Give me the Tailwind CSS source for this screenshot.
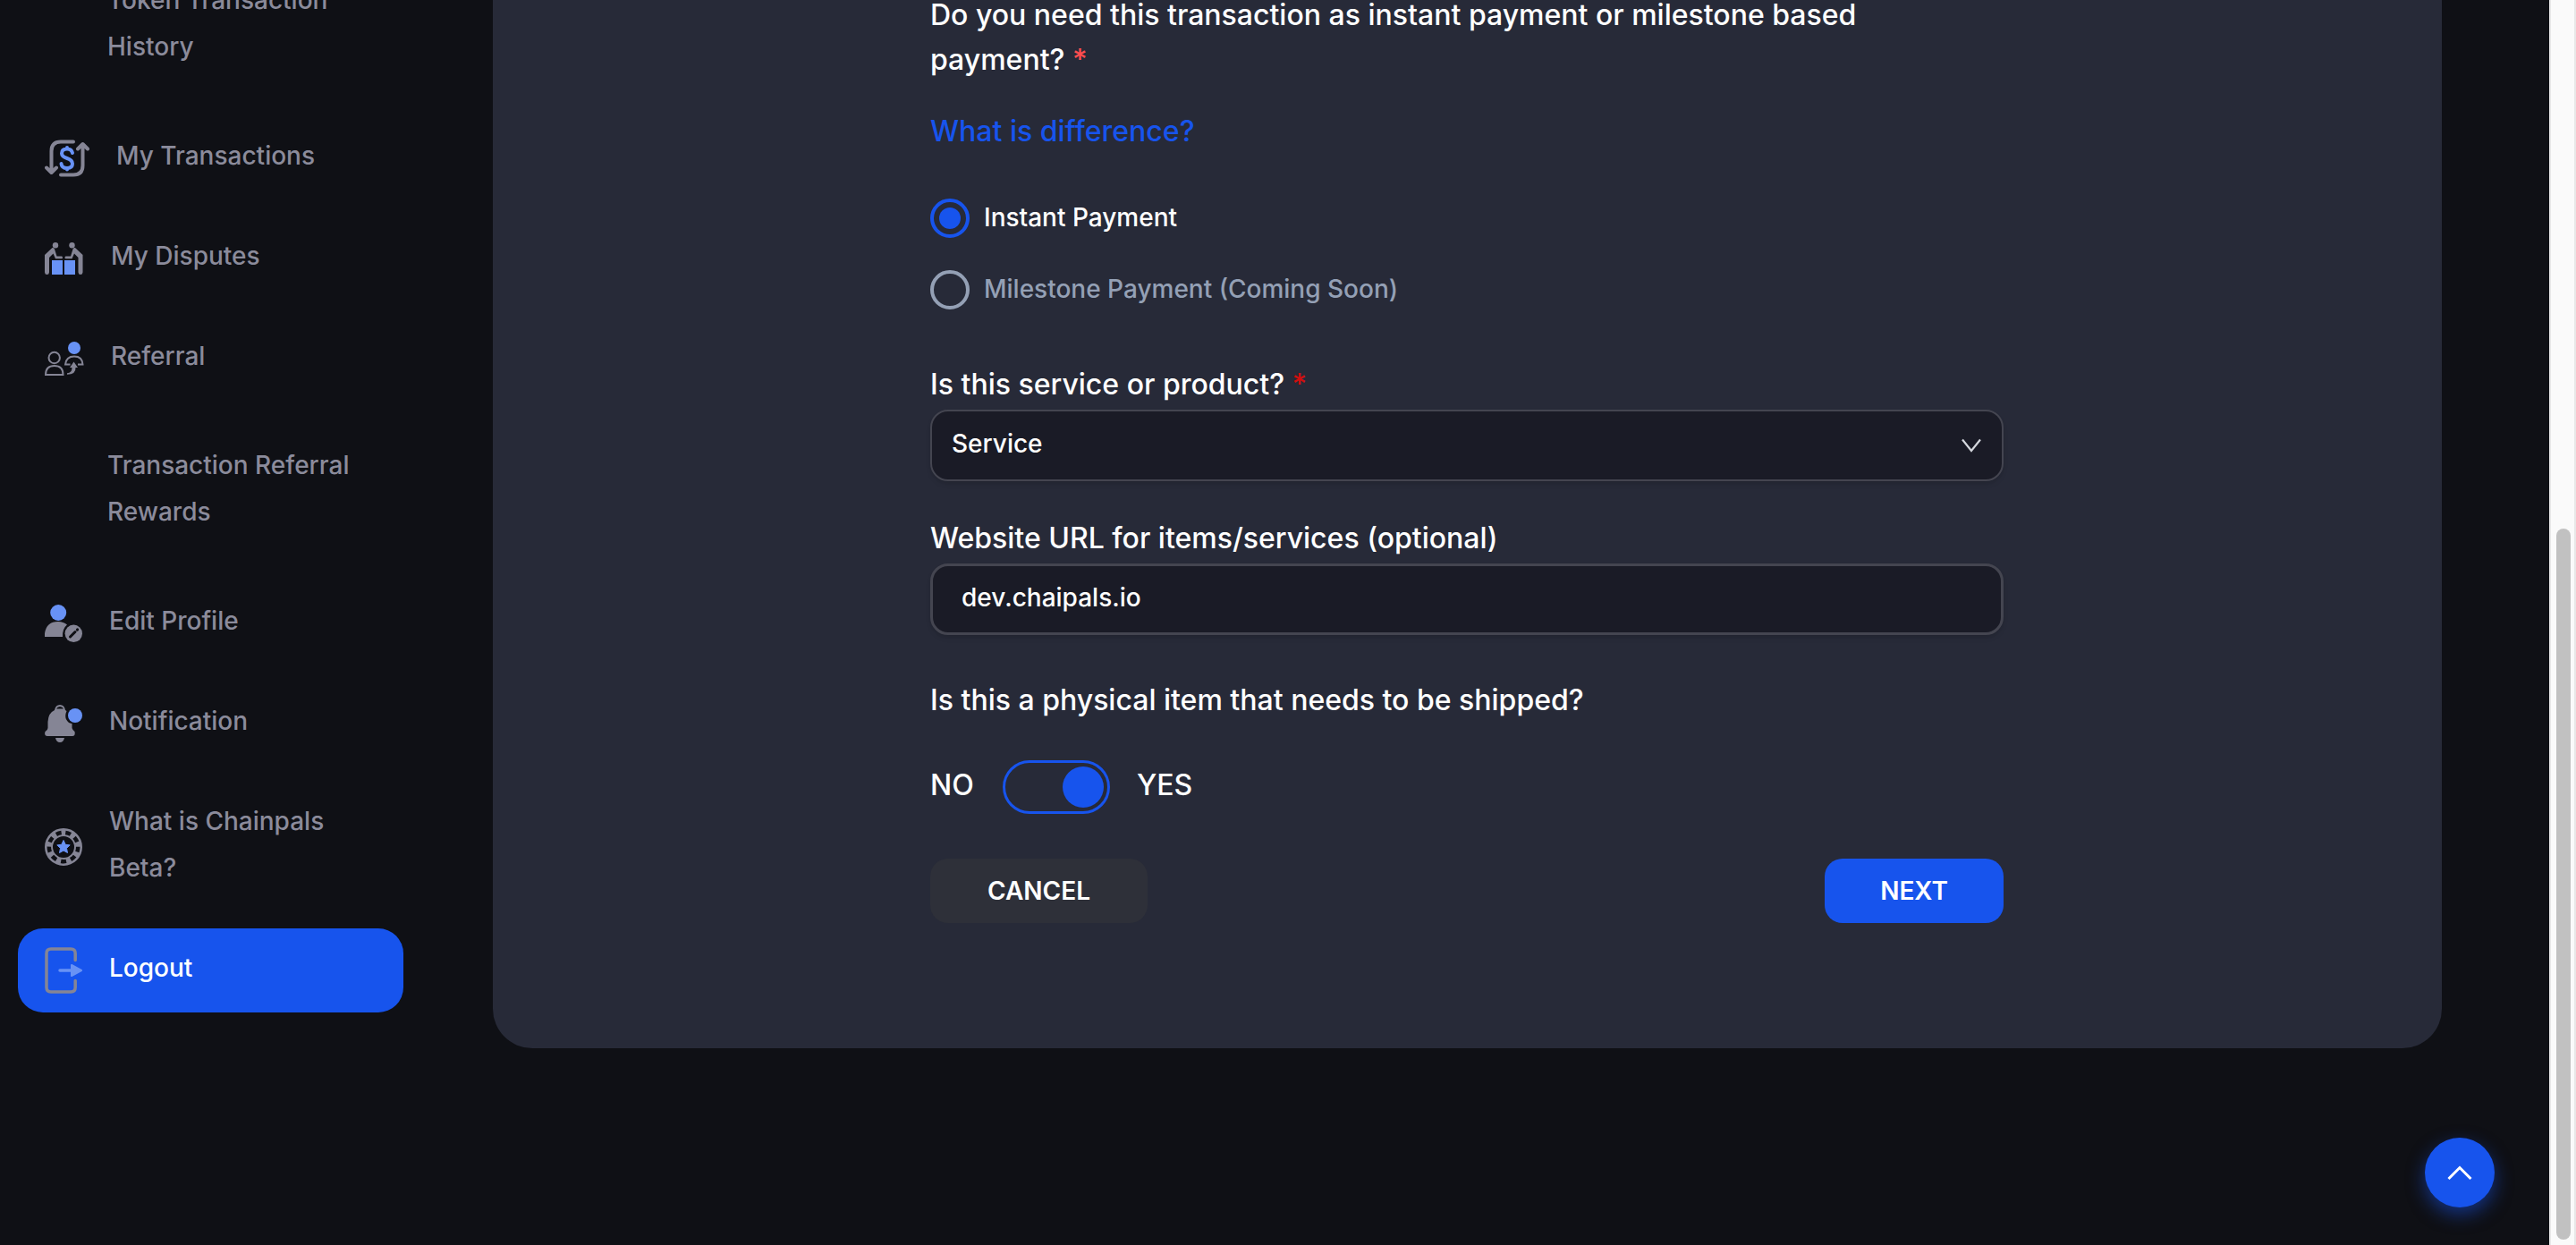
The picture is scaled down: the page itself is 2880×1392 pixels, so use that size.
<!DOCTYPE html>
<html lang="en">
<head>
<meta charset="utf-8">
<meta name="viewport" content="width=device-width, initial-scale=1">
<title>Chainpals</title>
<script src="https://cdn.jsdelivr.net/npm/@tailwindcss/browser@4"></script>
</head>
<body class="relative flex h-screen overflow-hidden bg-[#0f1015] font-['Inter',sans-serif] font-medium text-white">

<aside class="w-[551px] shrink-0 pl-5 pr-[100px]">
  <nav class="-mt-[54px] flex flex-col gap-[18px] text-[28px] leading-[52px] text-[#8b8b9b]">
    <a href="#" class="block pt-7 pr-12 pb-[34px] pl-[100px]">Token Transaction History</a>

    <a href="#" class="flex items-center gap-[30px] py-[18px] pl-[30px]">
      <svg class="h-[42px] w-[50px] shrink-0" viewBox="0 0 50 42" fill="none" stroke="#858595" stroke-width="4" stroke-linecap="round" stroke-linejoin="round">
        <path d="M32 2.500H18Q7.500 2.500 7.500 13V36M2 31.500L7.500 37L13 31.500"/>
        <path d="M18 39.500H32Q42.500 39.500 42.500 29V6M37 10.500L42.500 5L48 10.500"/>
        <path stroke="#6892f5" d="M31 15Q30 10.500 25 10.500Q19 10.500 19 15.500Q19 19 25 21Q31 23 31 27Q31 32 25 32Q19 32 18.500 27M25 9V10M25 32V33.500"/>
      </svg>
      <span class="pb-1.5">My Transactions</span>
    </a>

    <a href="#" class="flex items-center gap-[30px] py-[18px] pl-[30px]">
      <svg class="h-9 w-11 shrink-0" viewBox="0 0 44 36" fill="#858595">
        <circle cx="12" cy="3.200" r="3.200"/><circle cx="30.500" cy="3.200" r="3.200"/>
        <path d="M0 14L8.500 6Q10.500 5.500 11 7.500L13.500 15.500H19Q20 15.800 20 17T19 18.300H12L9.500 12.500L5 17V33.500Q4.800 36 2.500 36T0 33.500Z"/>
        <path d="M42.500 14L34 6Q32 5.500 31.500 7.500L29 15.500H23.500Q22.500 15.800 22.500 17T23.500 18.300H30.500L33 12.500L37.500 17V33.500Q37.700 36 40 36T42.500 33.500Z"/>
        <path fill="#6892f5" d="M8 20H20V36H8ZM22 20H34V36H22Z"/>
      </svg>
      <span class="pb-1.5">My Disputes</span>
    </a>

    <a href="#" class="flex items-center gap-[30px] py-[18px] pl-[30px]">
      <svg class="h-[38px] w-11 shrink-0" viewBox="0 0 44 38" fill="none" stroke="#858595" stroke-width="2">
        <circle cx="10.700" cy="18" r="6.200"/>
        <path d="M1 37Q1 27 10.800 27T20.500 37Z"/>
        <path d="M28.500 25.500H23Q24 16.500 33 16.500T42.500 25.500H37"/>
        <circle cx="33" cy="7" r="7" fill="#6892f5" stroke="none"/>
        <path fill="#858595" stroke="none" d="M32.500 22.500L37 29H34.500Q35 36.800 25 36.800V35.300Q30.500 35 30.500 29H28Z"/>
      </svg>
      <span class="pb-1.5">Referral</span>
    </a>

    <a href="#" class="block pt-7 pr-12 pb-[34px] pl-[100px]">Transaction Referral Rewards</a>

    <a href="#" class="flex items-center gap-[30px] py-[18px] pl-[30px]">
      <svg class="h-[42px] w-[42px] shrink-0" viewBox="0 0 42 42" fill="#858595">
        <circle cx="15.200" cy="9" r="9" fill="#6892f5"/>
        <path d="M0 36V32Q2 19 15 19Q21 19 25 22.500Q19.500 27 20 36Z"/>
        <circle cx="32.300" cy="32.300" r="9.700"/>
        <path stroke="#0f1015" stroke-width="3" stroke-linecap="round" d="M28.500 36L34 30.500M36.400 28.100L36.600 27.900"/>
      </svg>
      <span class="pb-1.5">Edit Profile</span>
    </a>

    <a href="#" class="flex items-center gap-[30px] py-[18px] pl-[30px]">
      <svg class="h-[42px] w-[42px] shrink-0" viewBox="0 0 42 42" fill="#858595">
        <path d="M11 6Q12 0 17 0T23 6L24.500 7Q21 15 27 20Q29.500 21 30.500 21V26Q31 28 33.500 30Q34.500 35 31 35H3Q-1 34.500 0.500 30Q3.500 28 3.500 26V19Q4 9 11 6Z"/>
        <path fill="#0f1015" d="M13 4.500H21Q20 2 17 2T13 4.500Z"/>
        <path d="M12 37H22Q21 42 17 42T12 37Z"/>
        <circle cx="34" cy="12" r="8" fill="#6892f5"/>
      </svg>
      <span class="pb-1.5">Notification</span>
    </a>

    <a href="#" class="flex items-center gap-[30px] py-[18px] pr-12 pl-[30px]">
      <svg class="h-[42px] w-[42px] shrink-0" viewBox="0 0 42 42" fill="none">
        <circle cx="21" cy="21" r="16.500" stroke="#858595" stroke-width="9"/>
        <circle cx="21" cy="21" r="16.200" stroke="#0f1015" stroke-width="4.500" stroke-dasharray="6 5.310" transform="rotate(-82 21 21)"/>
        <path fill="#6892f5" stroke="#6892f5" stroke-linejoin="round" d="M21 13.500L23.200 18.300L28.200 18.900L24.500 22.400L25.500 27.500L21 25L16.500 27.500L17.500 22.400L13.800 18.900L18.800 18.300Z"/>
      </svg>
      <span class="pb-1.5">What is Chainpals Beta?</span>
    </a>

    <a href="#" class="flex items-center gap-[30px] rounded-[28px] bg-[#1754ed] py-[18px] pl-[30px] text-white">
      <svg class="h-[52px] w-[42px] shrink-0" viewBox="0 0 42 52" fill="none" stroke="#858595" stroke-width="3.500" stroke-linecap="round">
        <path d="M34.200 14.500V7Q34.200 2 29.200 2H7Q2 2 2 7V45Q2 50 7 50H29.200Q34.200 50 34.200 45V37.500"/>
        <path stroke="#6892f5" d="M17 26H30"/>
        <path fill="#6892f5" stroke="#6892f5" stroke-width="2" stroke-linejoin="round" d="M30 20L41 26L30 32Z"/>
      </svg>
      <span class="pb-1.5">Logout</span>
    </a>
  </nav>
</aside>

<main class="mr-[120px] flex-1">
  <form class="rounded-b-[44px] bg-[#272a38] pr-[33px] pb-[140px] pl-8">
    <div class="mx-auto flex max-w-[1200px] flex-col text-[32px] leading-[50px]">
      <p class="-mt-2 max-w-[1100px]">Do you need this transaction as instant payment or milestone based payment? <span class="text-[#ff4d4f]">*</span></p>
      <a href="#" class="mt-[30px] self-start text-[#1754ed]">What is difference?</a>

      <div class="mt-[50px] flex flex-col gap-9 text-[28px] leading-[40px]">
        <label class="flex items-center gap-4">
          <input type="radio" name="payment" checked class="size-11 appearance-none rounded-full border-4 border-[#94a3b8] bg-clip-content p-1.5 checked:border-[#1754ed] checked:bg-[#1754ed]">
          <span class="pb-0.5">Instant Payment</span>
        </label>
        <label class="flex items-center gap-4 text-[#94a0b5]">
          <input type="radio" name="payment" disabled class="size-11 appearance-none rounded-full border-4 border-[#94a0b5] p-1.5">
          <span class="pb-0.5">Milestone Payment (Coming Soon)</span>
        </label>
      </div>

      <label for="kind" class="mt-[59px]">Is this service or product? <span class="text-[#d10f0f]">*</span></label>
      <div class="relative mt-[3px]">
        <select id="kind" class="block h-20 w-full appearance-none rounded-[20px] border-2 border-[#444550] bg-[#1a1b26] px-[22px] pb-1 text-[28px] shadow-md">
          <option>Service</option>
          <option>Product</option>
        </select>
        <svg class="pointer-events-none absolute top-8 right-6 h-4 w-6" viewBox="0 0 24 16" fill="none" stroke="#d4d7dd" stroke-width="2.200"><path d="M2 1.500L12 14L22 1.500"/></svg>
      </div>

      <label for="url" class="mt-[39px]">Website URL for items/services (optional)</label>
      <input id="url" type="text" value="dev.chaipals.io" class="mt-[3px] block h-20 w-full rounded-[20px] border-3 border-[#444550] bg-[#1a1b26] px-8 pb-1 text-[28px] shadow-md">

      <p class="mt-12">Is this a physical item that needs to be shipped?</p>
      <div class="mt-[42px] flex h-[60px] items-center">
        <span class="w-[81px] pb-1">NO</span>
        <input type="checkbox" checked aria-label="Physical item" class="relative h-[60px] w-[120px] appearance-none rounded-full border-3 border-[#1754ed] before:absolute before:top-1 before:right-1 before:size-[46px] before:rounded-full before:bg-[#1754ed]">
        <span class="pb-1 pl-[30px]">YES</span>
      </div>

      <div class="mt-[50px] flex justify-between text-[28px] font-semibold">
        <button type="button" class="h-[72px] w-[243px] rounded-[20px] bg-[#2e3039]">CANCEL</button>
        <button type="button" class="h-[72px] w-[200px] rounded-[20px] bg-[#1754ed]">NEXT</button>
      </div>
    </div>
  </form>
</main>

<button type="button" aria-label="Back to top" class="absolute right-[91px] bottom-[42px] flex size-[78px] items-center justify-center rounded-full bg-[#1754ed] shadow-[0_8px_20px_rgba(23,84,237,0.5)]">
  <svg class="h-4 w-7" viewBox="0 0 28 16" fill="none" stroke="#fff" stroke-width="3"><path d="M1.500 15L14 2.500L26.500 15"/></svg>
</button>

<div class="flex w-[30px] shrink-0 flex-col border-x-2 border-[#e8e8e8] bg-[#fafafa] px-1.5 pb-1.5">
  <div class="h-[591px]"></div>
  <div class="w-4 flex-1 rounded-full bg-[#c1c1c1]"></div>
</div>
</body>
</html>
